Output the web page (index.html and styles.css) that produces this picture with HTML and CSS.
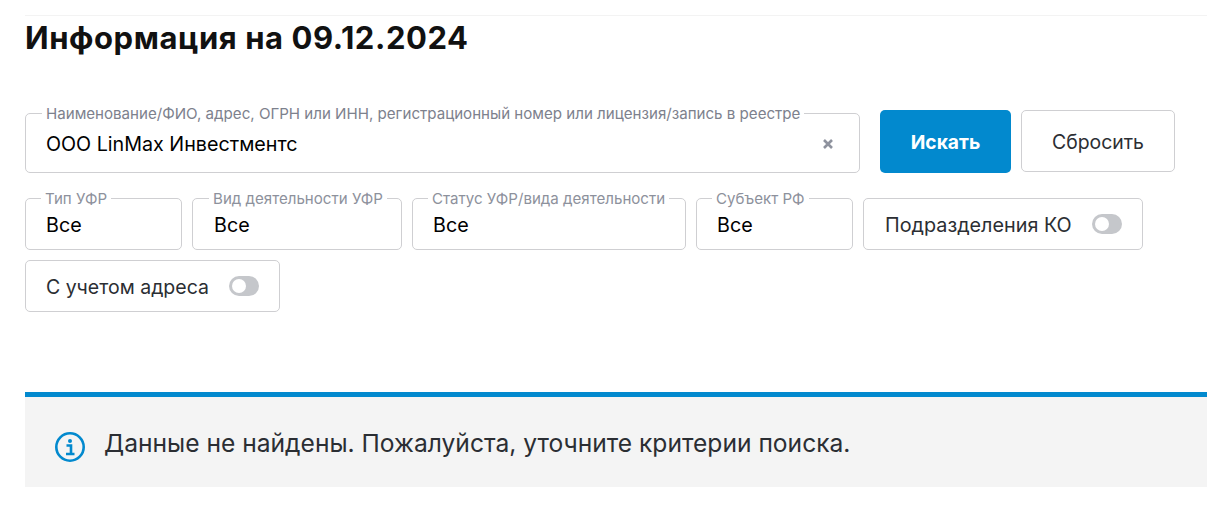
FILE: index.html
```html
<!DOCTYPE html>
<html lang="ru">
<head>
<meta charset="utf-8">
<title>Информация</title>
<link rel="stylesheet" href="styles.css">
</head>
<body>
<main class="page">
  <h1 class="title">Информация на 09.12.2024</h1>
  <div class="search-row">
    <div class="field field-search">
      <span class="legend">Наименование/ФИО, адрес, ОГРН или ИНН, регистрационный номер или лицензия/запись в реестре</span>
      <span class="value">ООО LinMax Инвестментс</span>
      <svg class="clear" viewBox="0 0 10 10" width="10" height="10"><path d="M1 1l8 8M9 1l-8 8" stroke="#8e929e" stroke-width="2.6" fill="none"/></svg>
    </div>
    <button class="btn btn-primary">Искать</button>
    <button class="btn btn-reset">Сбросить</button>
  </div>
  <div class="filters">
    <div class="field f-type"><span class="legend">Тип УФР</span><span class="value">Все</span></div>
    <div class="field f-kind"><span class="legend">Вид деятельности УФР</span><span class="value">Все</span></div>
    <div class="field f-status"><span class="legend">Статус УФР/вида деятельности</span><span class="value">Все</span></div>
    <div class="field f-subj"><span class="legend">Субъект РФ</span><span class="value">Все</span></div>
    <div class="toggle-box f-ko"><span class="toggle-label">Подразделения КО</span><span class="switch"></span></div>
    <div class="toggle-box f-addr"><span class="toggle-label">С учетом адреса</span><span class="switch"></span></div>
  </div>
  <div class="alert">
    <svg class="info" viewBox="0 0 30 30" width="30" height="30" fill="none">
      <circle cx="15" cy="15" r="13.7" stroke="#0289ce" stroke-width="2.6"/>
      <circle cx="15" cy="9" r="2" fill="#0289ce"/>
      <path d="M11.5 13.5h4.5v8M11 22h8.5" stroke="#0289ce" stroke-width="2.6"/>
    </svg>
    <span class="alert-text">Данные не найдены. Пожалуйста, уточните критерии поиска.</span>
  </div>
</main>
</body>
</html>
```

FILE: styles.css
```css
* { box-sizing: border-box; }
html, body { margin: 0; padding: 0; background: #fff; }
body { font-family: Inter, "Noto Sans", sans-serif; color: #2b2e33; }
.page { padding: 15px 0 0 25px; height: 527px; overflow: hidden; }
.title {
  margin: 0;
  border-top: 1px solid #f3f3f3;
  height: 98px;
  padding-top: 2px;
  font-size: 31px;
  letter-spacing: 0.57px;
  line-height: 40px;
  font-weight: 700;
  color: #111;
}
.search-row { display: flex; align-items: flex-start; height: 63px; margin-top: -3px; }
.field {
  position: relative;
  height: 52px;
  border: 1px solid #cfcfd2;
  border-radius: 5px;
  padding: 14px 20px 0;
  background: #fff;
}
.field-search {
  width: 835px;
  height: 60px;
  margin-top: 3px;
  padding-top: 18px;
  display: flex;
  justify-content: space-between;
  align-items: flex-start;
}
.legend {
  position: absolute;
  top: -8px;
  left: 15px;
  padding: 0 4px;
  background: #fff;
  font-size: 15.1px;
  line-height: 16px;
  color: #8d919c;
  white-space: nowrap;
}
.field-search .legend, .f-kind .legend { left: 16px; }
.field-search .legend { color: #7d818d; font-size: 15.12px; }
.value { font-size: 19.7px; line-height: 24px; color: #000; }
.f-kind .value { margin-left: 1px; }
.clear { margin: 7px 6px 0 0; }
.btn {
  font-family: inherit;
  font-size: 19.4px;
  border-radius: 5px;
  cursor: pointer;
  padding: 0;
}
.btn-primary {
  width: 131px;
  height: 63px;
  margin-left: 20px;
  border: 0;
  background: #0289ce;
  color: #fff;
  font-weight: 700;
  font-size: 19.2px;
}
.btn-reset {
  width: 154px;
  height: 62px;
  margin-left: 10px;
  border: 1px solid #cfcfd2;
  background: #fff;
  color: #2b2e33;
  padding-top: 2px;
}
.filters { display: flex; flex-wrap: wrap; gap: 10px; margin-top: 25px; width: 1150px; }
.f-type { width: 157px; }
.f-kind { width: 210px; }
.f-status { width: 274px; }
.f-subj { width: 157px; }
.f-ko { width: 280px; font-size: 19.8px; }
.f-addr { width: 255px; font-size: 19.5px; }
.toggle-box {
  display: flex;
  align-items: center;
  justify-content: space-between;
  height: 52px;
  border: 1px solid #cfcfd2;
  border-radius: 5px;
  padding: 0 20px;
}
.toggle-label { margin-left: 1px; padding-top: 2px; }
.f-addr .toggle-label { margin-left: 0; }
.switch {
  position: relative;
  width: 30px;
  height: 20px;
  border-radius: 10px;
  background: #c5c7cb;
}
.switch::after {
  content: "";
  position: absolute;
  left: 3px;
  top: 3px;
  width: 14px;
  height: 14px;
  border-radius: 50%;
  background: #fff;
}
.alert {
  display: flex;
  align-items: center;
  gap: 19px;
  height: 95px;
  margin-top: 80px;
  padding: 2px 0 0 30px;
  border-top: 5px solid #0289ce;
  background: #f4f4f4;
}
.info { margin-top: 8px; }
.alert-text { font-size: 24.6px; color: #2b2e33; }
```
